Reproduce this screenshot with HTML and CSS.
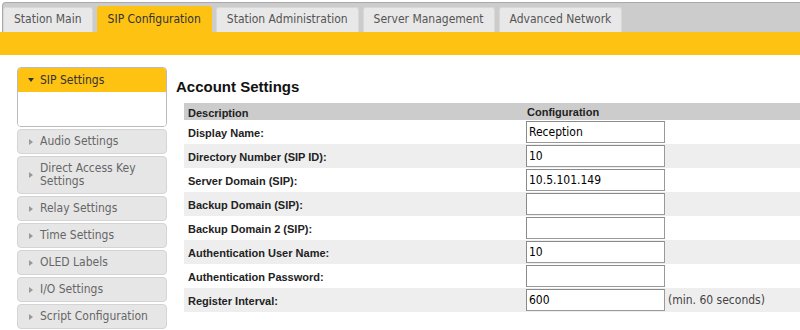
FILE: index.html
```html
<!DOCTYPE html>
<html lang="en">
<head>
    <meta charset="UTF-8">
    <title>SIP Configuration</title>
    <link rel="stylesheet" href="styles.css">
</head>
<body>

<div class="tabbar">
    <div class="tab">Station Main</div>
    <div class="tab active">SIP Configuration</div>
    <div class="tab">Station Administration</div>
    <div class="tab">Server Management</div>
    <div class="tab">Advanced Network</div>
</div>
<div class="band"></div>

<div class="page">
    <div class="sidebar">
        <div class="panel-open">
            <div class="panel-head"><span class="arrow-down"></span><span>SIP Settings</span></div>
            <div class="panel-body"></div>
        </div>
        <div class="panel"><span class="arrow-right"></span><span>Audio Settings</span></div>
        <div class="panel"><span class="arrow-right"></span><span>Direct Access Key Settings</span></div>
        <div class="panel"><span class="arrow-right"></span><span>Relay Settings</span></div>
        <div class="panel"><span class="arrow-right"></span><span>Time Settings</span></div>
        <div class="panel"><span class="arrow-right"></span><span>OLED Labels</span></div>
        <div class="panel"><span class="arrow-right"></span><span>I/O Settings</span></div>
        <div class="panel"><span class="arrow-right"></span><span>Script Configuration</span></div>
    </div>

    <div class="main">
        <h2>Account Settings</h2>
        <table class="settings">
            <tr>
                <th class="desc">Description</th>
                <th>Configuration</th>
            </tr>
            <tr>
                <td class="desc">Display Name:</td>
                <td><input type="text" value="Reception"></td>
            </tr>
            <tr class="alt">
                <td class="desc">Directory Number (SIP ID):</td>
                <td><input type="text" value="10"></td>
            </tr>
            <tr>
                <td class="desc">Server Domain (SIP):</td>
                <td><input type="text" value="10.5.101.149"></td>
            </tr>
            <tr class="alt">
                <td class="desc">Backup Domain (SIP):</td>
                <td><input type="text" value=""></td>
            </tr>
            <tr>
                <td class="desc">Backup Domain 2 (SIP):</td>
                <td><input type="text" value=""></td>
            </tr>
            <tr class="alt">
                <td class="desc">Authentication User Name:</td>
                <td><input type="text" value="10"></td>
            </tr>
            <tr>
                <td class="desc">Authentication Password:</td>
                <td><input type="password" value=""></td>
            </tr>
            <tr class="alt">
                <td class="desc">Register Interval:</td>
                <td><input type="text" value="600"><span class="hint">(min. 60 seconds)</span></td>
            </tr>
        </table>
    </div>
</div>

</body>
</html>
```

FILE: styles.css
```css
* {
    box-sizing: border-box;
}
body {
    margin: 0;
    background: #fff;
    font-family: "DejaVu Sans Condensed", "DejaVu Sans", sans-serif;
    font-size: 12px;
    overflow: hidden;
}
.tabbar {
    display: flex;
    align-items: flex-end;
    margin: 2px 0 0 2px;
    height: 30px;
    background: #cccccc;
    border-top: 1px solid #a9a9a9;
    border-left: 1px solid #a9a9a9;
    border-top-left-radius: 4px;
}
.tab {
    height: 25px;
    line-height: 23px;
    padding: 0 10px;
    margin-right: 4px;
    background: #e8e8e8;
    color: #555;
    border: 1px solid #d8d8d8;
    border-bottom: 0;
    border-radius: 3px 3px 0 0;
    white-space: nowrap;
}
.tab.active {
    height: 26px;
    line-height: 25px;
    background: #fdc212;
    border-color: #fdc212;
    color: #333;
}
.band {
    height: 23px;
    background: #fdc212;
}
.page {
    display: flex;
    padding: 12px 0 0 17px;
}
.sidebar {
    width: 150px;
    flex-shrink: 0;
    margin-right: 9px;
}
.panel-open {
    border: 1px solid #bbb;
    border-radius: 4px;
    overflow: hidden;
    margin-bottom: 2px;
}
.panel-head {
    display: flex;
    align-items: center;
    height: 24px;
    padding-left: 10px;
    background: #fdc212;
    color: #333;
}
.panel-body {
    height: 34px;
    background: #fff;
}
.arrow-down {
    width: 0;
    height: 0;
    border-top: 4px solid #333;
    border-left: 3.5px solid transparent;
    border-right: 3.5px solid transparent;
    margin-right: 6px;
}
.panel {
    display: flex;
    align-items: center;
    padding: 5px 8px 5px 11px;
    line-height: 13px;
    margin-bottom: 2px;
    background: #e6e6e6;
    border: 1px solid #d4d4d4;
    border-radius: 4px;
    color: #666;
}
.arrow-right {
    flex-shrink: 0;
    width: 0;
    height: 0;
    border-left: 4px solid #999;
    border-top: 3px solid transparent;
    border-bottom: 3px solid transparent;
    margin-right: 7px;
}
.main {
    flex: 1;
    min-width: 0;
}
.main h2 {
    margin: 11px 0 7px;
    font-family: "Liberation Sans", Arial, sans-serif;
    font-size: 15px;
    line-height: 18px;
    color: #111;
}
.settings {
    margin-left: 8px;
    width: calc(100% - 8px);
    border-collapse: collapse;
    font-family: "Liberation Sans", Arial, sans-serif;
    font-size: 11px;
}
.settings th {
    height: 17px;
    padding: 0 4px;
    background: #cccccc;
    color: #222;
    text-align: left;
}
.settings td {
    height: 24px;
    padding: 1px 4px 1px 3px;
    vertical-align: middle;
}
.settings .desc {
    width: 339px;
    padding-left: 4px;
    padding-top: 2px;
    font-weight: bold;
    color: #222;
}
.settings tr.alt td {
    background: #eeeeee;
}
.settings input {
    width: 139px;
    height: 22px;
    padding: 0 2px;
    margin: 0;
    border: 1px solid #999;
    border-top-color: #8a8a8a;
    border-left-color: #8a8a8a;
    background: #fff;
    font-family: "DejaVu Sans Condensed", "DejaVu Sans", sans-serif;
    font-size: 12px;
    color: #000;
    vertical-align: middle;
}
.hint {
    margin-left: 3px;
    font-family: "DejaVu Sans Condensed", "DejaVu Sans", sans-serif;
    font-size: 12px;
    color: #444;
    vertical-align: middle;
}
```
